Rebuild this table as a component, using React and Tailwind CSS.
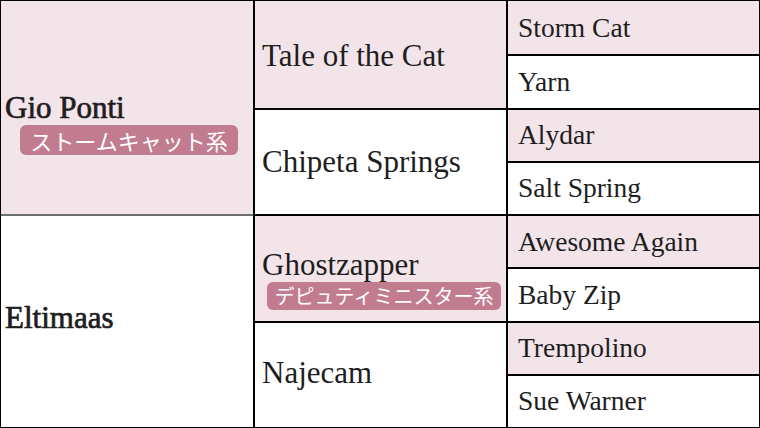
const serif = { fontFamily: '"Liberation Serif", "Times New Roman", serif' };

function Badge({ children, className }) {
  return (
    <span
      className={`self-center inline-flex items-center justify-center rounded-md bg-[#c27c8f] text-white whitespace-nowrap ${className}`}
      style={{ fontFamily: '"Noto Sans CJK JP", "Noto Sans", sans-serif' }}
    >
      {children}
    </span>
  );
}

export default function App() {
  const pink = 'bg-[#f3e4ea]';
  const hline = 'border-t-2 border-[#6e6e6e]';
  const vline = 'border-l-2 border-black';

  const col3 = [
    'Storm Cat',
    'Yarn',
    'Alydar',
    'Salt Spring',
    'Awesome Again',
    'Baby Zip',
    'Trempolino',
    'Sue Warner',
  ];

  return (
    <div
      className="w-[760px] h-[428px] border border-black bg-white text-[#1e1e1e] grid grid-cols-[252px_253px_1fr] grid-rows-[repeat(8,1fr)] overflow-hidden"
      style={serif}
    >
      {/* generation 1 */}
      <div className={`col-start-1 row-start-1 row-span-4 ${pink} flex flex-col pt-[89px] pl-1`}>
        <div className="text-[31px] leading-[35px] [-webkit-text-stroke:0.7px_#1e1e1e]">Gio Ponti</div>
        <Badge className="h-[30px] px-[10px] text-[22px] leading-[30px]">ストームキャット系</Badge>
      </div>
      <div className={`col-start-1 row-start-5 row-span-4 ${hline} flex items-center pl-1 pb-2`}>
        <div className="text-[31px] leading-[36px] [-webkit-text-stroke:0.7px_#1e1e1e]">Eltimaas</div>
      </div>

      {/* generation 2 */}
      <div className={`col-start-2 row-start-1 row-span-2 ${pink} ${vline} flex items-center pl-[7px] pt-1`}>
        <div className="text-[31px] leading-[36px]">Tale of the Cat</div>
      </div>
      <div className={`col-start-2 row-start-3 row-span-2 ${vline} ${hline} flex items-center pl-[7px]`}>
        <div className="text-[31px] leading-[36px]">Chipeta Springs</div>
      </div>
      <div className={`col-start-2 row-start-5 row-span-2 ${pink} ${vline} ${hline} flex flex-col pt-[31px] pl-[7px]`}>
        <div className="text-[31px] leading-[35px]">Ghostzapper</div>
        <Badge className="h-[28px] px-[8px] text-[20px] leading-[28px]">デピュティミニスター系</Badge>
      </div>
      <div className={`col-start-2 row-start-7 row-span-2 ${vline} ${hline} flex items-center pl-[7px] pb-1`}>
        <div className="text-[31px] leading-[36px]">Najecam</div>
      </div>

      {/* generation 3 */}
      {col3.map((name, i) => (
        <div
          key={name}
          className={`col-start-3 flex items-center pl-[10px] ${vline} ${i > 0 ? hline : ''} ${i % 2 === 0 ? pink : ''}`}
          style={{ gridRowStart: i + 1 }}
        >
          <div className="text-[27.5px] leading-[32px]">{name}</div>
        </div>
      ))}
    </div>
  );
}
